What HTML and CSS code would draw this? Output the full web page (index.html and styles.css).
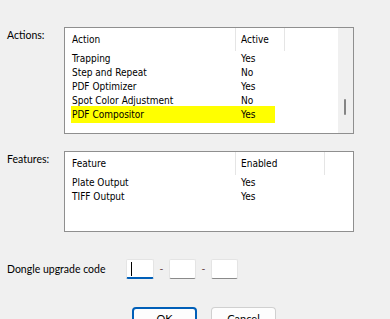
FILE: index.html
```html
<!DOCTYPE html>
<html>
<head>
<meta charset="utf-8">
<link rel="stylesheet" href="styles.css">
</head>
<body>
<div class="dialog">
  <div class="name-row">
    <span class="name-label">Name:</span>
    <span class="name-value">Test Flow Std</span>
  </div>

  <div class="field-row actions-row">
    <div class="field-label">Actions:</div>
    <div class="listbox actions-box">
      <div class="list-main">
        <div class="list-head">
          <div class="col c1">Action</div>
          <div class="col c2">Active</div>
          <div class="col c3"></div>
        </div>
        <div class="list-row"><div class="col c1">Trapping</div><div class="col c2">Yes</div></div>
        <div class="list-row"><div class="col c1">Step and Repeat</div><div class="col c2">No</div></div>
        <div class="list-row"><div class="col c1">PDF Optimizer</div><div class="col c2">Yes</div></div>
        <div class="list-row"><div class="col c1">Spot Color Adjustment</div><div class="col c2">No</div></div>
        <div class="list-row marked"><div class="col c1">PDF Compositor</div><div class="col c2">Yes</div></div>
      </div>
      <div class="scrollbar"><div class="thumb"></div></div>
    </div>
  </div>

  <div class="field-row features-row">
    <div class="field-label">Features:</div>
    <div class="listbox features-box">
      <div class="list-main">
        <div class="list-head">
          <div class="col c1">Feature</div>
          <div class="col c2f">Enabled</div>
          <div class="col c3"></div>
        </div>
        <div class="list-row"><div class="col c1">Plate Output</div><div class="col c2f">Yes</div></div>
        <div class="list-row"><div class="col c1">TIFF Output</div><div class="col c2f">Yes</div></div>
      </div>
    </div>
  </div>

  <div class="dongle-row">
    <div class="dongle-label">Dongle upgrade code</div>
    <div class="code-inputs">
      <div class="code-box focused"><span class="caret"></span></div>
      <span class="dash">-</span>
      <div class="code-box"></div>
      <span class="dash">-</span>
      <div class="code-box"></div>
    </div>
  </div>

  <div class="buttons">
    <button class="btn default">OK</button>
    <button class="btn">Cancel</button>
  </div>
</div>
</body>
</html>
```

FILE: styles.css
```css
html, body {
  margin: 0;
  padding: 0;
  background: #f0f0f0;
  overflow: hidden;
}
body {
  width: 390px;
  height: 319px;
  font-family: Lato, "Liberation Sans", Arial, sans-serif;
  font-size: 10.5px;
  color: #000;
}
.dialog {
  display: flex;
  flex-direction: column;
}
.name-row {
  display: flex;
  height: 15px;
  line-height: 15px;
  margin-top: -12px;
}
.name-label {
  width: 74px;
  padding-left: 8px;
}
.field-row {
  display: flex;
}
.field-label {
  width: 64px;
  padding-left: 7px;
  box-sizing: border-box;
  line-height: 16px;
}
.actions-row {
  margin-top: 24px;
}
.features-row {
  margin-top: 17px;
}
.listbox {
  width: 290px;
  box-sizing: border-box;
  border: 1px solid #8f8f8f;
  background: #fff;
  display: flex;
  font-family: "DejaVu Sans Condensed", "DejaVu Sans", sans-serif;
  font-size: 10px;
}
.actions-box {
  height: 107px;
}
.features-box {
  height: 81px;
}
.list-main {
  flex: 1;
  display: flex;
  flex-direction: column;
}
.list-head {
  display: flex;
  height: 23px;
  line-height: 23px;
  margin-bottom: 1px;
}
.list-row {
  display: flex;
  height: 14px;
  line-height: 14px;
  position: relative;
}
.col {
  box-sizing: border-box;
  position: relative;
  z-index: 1;
}
.c1 {
  width: 171px;
  padding-left: 7px;
}
.c2 {
  width: 49px;
  padding-left: 5px;
}
.c2f {
  width: 89px;
  padding-left: 5px;
}
.c3 {
  width: 20px;
}
.list-head .c1,
.list-head .c2,
.list-head .c2f {
  border-right: 1px solid #e5e5e5;
}
.marked::before {
  content: "";
  position: absolute;
  left: 6px;
  top: -2px;
  width: 204px;
  height: 17px;
  background: #ffff00;
  z-index: 0;
}
.scrollbar {
  width: 15px;
  background: #f0f0f0;
  position: relative;
}
.thumb {
  position: absolute;
  left: 6px;
  top: 71px;
  width: 2px;
  height: 16px;
  background: #858585;
  border-radius: 1px;
}
.dongle-row {
  display: flex;
  align-items: center;
  margin-top: 27px;
  height: 20px;
}
.dongle-label {
  width: 126px;
  padding-left: 7px;
  box-sizing: border-box;
  white-space: nowrap;
}
.code-inputs {
  display: flex;
  align-items: center;
}
.code-box {
  width: 27px;
  height: 20px;
  box-sizing: border-box;
  background: #fff;
  border: 1px solid #e4e4e4;
  border-bottom: 1px solid #8a8a8a;
  border-radius: 2px;
  position: relative;
}
.code-box.focused {
  width: 28px;
  border-bottom: 2px solid #005fb8;
}
.caret {
  position: absolute;
  left: 4px;
  top: 2px;
  width: 1px;
  height: 14px;
  background: #000;
}
.dash {
  width: 15px;
  text-align: center;
  color: #6b4b4b;
  line-height: 20px;
}
.buttons {
  display: flex;
  gap: 14px;
  margin-top: 28px;
  padding-left: 132px;
}
.btn {
  width: 65px;
  height: 24px;
  box-sizing: border-box;
  background: #fdfdfd;
  border: 1px solid #d0d0d0;
  border-bottom-color: #b0b0b0;
  border-radius: 4px;
  font-family: Lato, "Liberation Sans", Arial, sans-serif;
  font-size: 11px;
  color: #000;
  padding: 0;
  line-height: 20px;
}
.btn.default {
  border: 2px solid #005fb8;
}
```
